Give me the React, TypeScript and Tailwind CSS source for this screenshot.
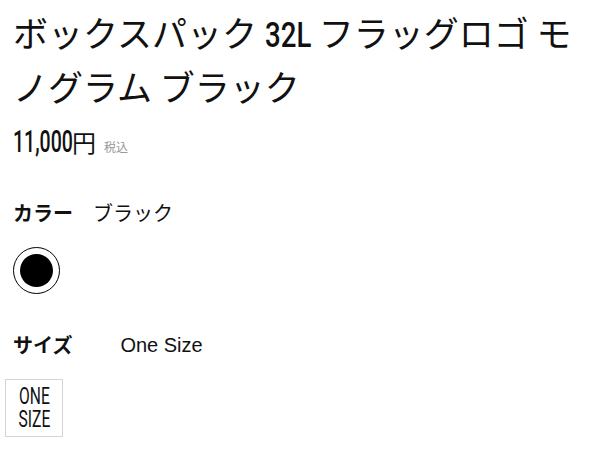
const jp = "font-['Noto_Sans_CJK_JP',sans-serif]"
const cond = "font-['Roboto','Noto_Sans_CJK_JP',sans-serif]"

export default function App() {
  return (
    <div className={`${jp} w-[600px] h-[450px] bg-white text-[#111] px-[13px] pt-[7px] overflow-hidden`}>
      <h1 className="text-[35px] leading-[50px] font-normal">
        ボックスパック{' '}
        <span className="inline-block w-[46px] whitespace-nowrap">
          <span className={`${cond} font-medium inline-block origin-left scale-x-[0.79]`}>32L</span>
        </span>{' '}
        フラッグロゴ モノグラム ブラック
      </h1>

      <div className="flex items-baseline mt-[17px] leading-[28px]">
        <span className="inline-block w-[59px] whitespace-nowrap">
          <span className={`${cond} font-medium text-[31px] inline-block origin-left scale-x-[0.63]`}>11,000</span>
        </span>
        <span className="text-[24px]">円</span>
        <span className="text-[12px] text-[#999] ml-2">税込</span>
      </div>

      <div className="flex items-center mt-[39px] text-[20px] leading-[26px]">
        <span className="font-bold">カラー</span>
        <span className="ml-[20px]">ブラック</span>
      </div>

      <button className="mt-[21px] w-[47px] h-[47px] rounded-full border border-black p-[6px] flex">
        <span className="w-full h-full rounded-full bg-black" />
      </button>

      <div className="flex items-center mt-[38px] text-[20px] leading-[26px]">
        <span className="font-bold">サイズ</span>
        <span className="ml-[48px] font-['Liberation_Sans',Arial,sans-serif]">One Size</span>
      </div>

      <div className="mt-[21px] -ml-2 w-[58px] h-[58px] border border-[#d4d4d4] flex items-center justify-center">
        <span className={`${cond} text-[23px] leading-[23px] text-center scale-x-[0.68] text-[#111]`}>
          ONE<br />SIZE
        </span>
      </div>
    </div>
  )
}
